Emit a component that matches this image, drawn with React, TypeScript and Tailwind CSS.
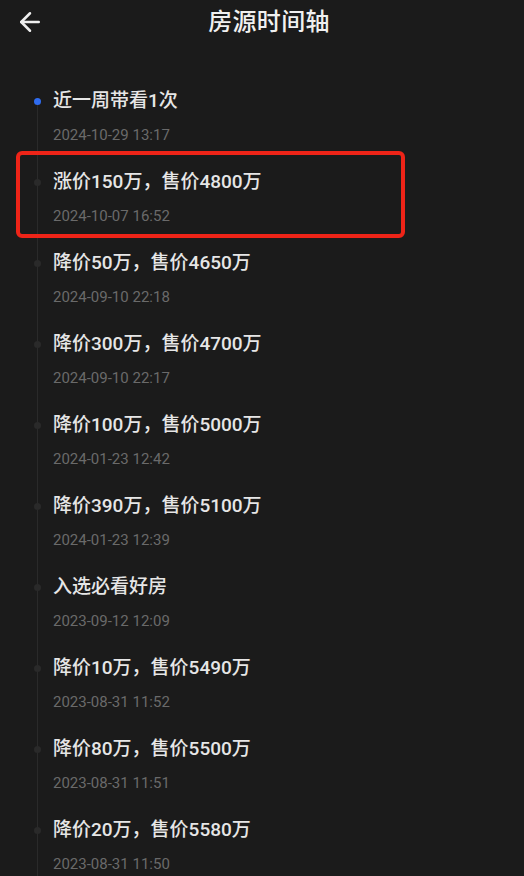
import { ArrowLeft } from 'lucide-react';

const items = [
  { title: '近一周带看1次', time: '2024-10-29 13:17' },
  { title: '涨价150万，售价4800万', time: '2024-10-07 16:52' },
  { title: '降价50万，售价4650万', time: '2024-09-10 22:18' },
  { title: '降价300万，售价4700万', time: '2024-09-10 22:17' },
  { title: '降价100万，售价5000万', time: '2024-01-23 12:42' },
  { title: '降价390万，售价5100万', time: '2024-01-23 12:39' },
  { title: '入选必看好房', time: '2023-09-12 12:09' },
  { title: '降价10万，售价5490万', time: '2023-08-31 11:52' },
  { title: '降价80万，售价5500万', time: '2023-08-31 11:51' },
  { title: '降价20万，售价5580万', time: '2023-08-31 11:50' },
];

export default function App() {
  return (
    <div
      className="h-[876px] w-[524px] overflow-hidden bg-[#1b1b1b] text-[#e8e8e8]"
      style={{ fontFamily: 'Roboto, "Noto Sans CJK SC", "Noto Sans", sans-serif' }}
    >
      {/* 顶部导航 */}
      <header className="flex h-[44px] items-center px-[15px]">
        <button className="text-[#eeeeee]" aria-label="返回">
          <ArrowLeft className="h-[30px] w-[30px]" strokeWidth={2} />
        </button>
        <h1 className="flex-1 pr-[16px] text-center text-[24px] font-medium tracking-[0.3px] text-[#f0f0f0]">
          房源时间轴
        </h1>
      </header>

      {/* 时间轴 */}
      <div className="flex flex-col pl-[34px] pt-[45px]">
        {items.map((it, i) => (
          <div key={i} className="relative flex h-[81px]">
            <div className="flex w-[7px] flex-col items-center">
              <span className={`h-[9px] w-px ${i === 0 ? 'bg-transparent' : 'bg-[#2a2a2a]'}`} />
              <span
                className={`h-[7px] w-[7px] rounded-full ${i === 0 ? 'bg-[#2f6cf0]' : 'bg-[#2a2a2a]'}`}
              />
              <span className="w-px flex-1 bg-[#2a2a2a]" />
            </div>
            <div className="ml-[12px]">
              <p className="text-[19px] font-medium leading-[24px] text-[#e6e6e6]">{it.title}</p>
              <p className="mt-[12px] text-[15px] leading-[20px] text-[#6a6a6a]">{it.time}</p>
            </div>
            {i === 1 && (
              <span className="pointer-events-none absolute left-[-18px] top-[-19px] h-[87px] w-[389px] rounded-[6px] border-[4px] border-[#ee2418]" />
            )}
          </div>
        ))}
      </div>
    </div>
  );
}
